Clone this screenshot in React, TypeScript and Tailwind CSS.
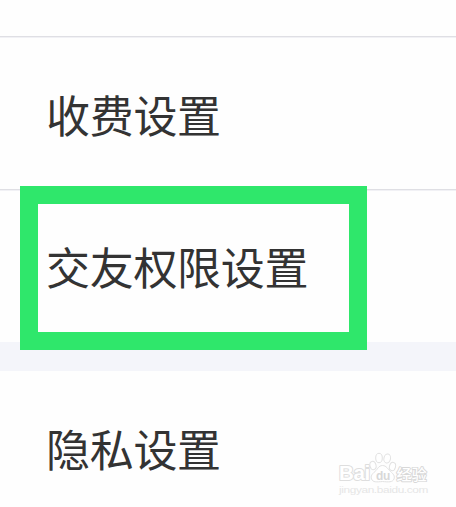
function Watermark() {
  return (
    <svg
      className="absolute left-[334px] top-[448px]"
      width="100"
      height="54"
      viewBox="0 0 100 54"
      fill="#ffffff"
      stroke="#e2e2e2"
      strokeWidth="1"
      strokeLinejoin="round"
      fontFamily='"Liberation Sans", "Noto Sans CJK SC", sans-serif'
    >
      <text x="5" y="32" fontSize="19.500" fontWeight="700" textLength="31" lengthAdjust="spacingAndGlyphs" strokeWidth="2" stroke="#dedede" paintOrder="stroke">Bai</text>
      <ellipse cx="39" cy="17.5" rx="3" ry="4.2" transform="rotate(-15 39 17.5)" />
      <ellipse cx="45" cy="10" rx="3.300" ry="4.700" />
      <ellipse cx="53.200" cy="10.500" rx="3.300" ry="4.500" transform="rotate(12 53.2 10.5)" />
      <ellipse cx="58.500" cy="18.500" rx="3" ry="4.2" transform="rotate(15 58.5 18.5)" />
      <path d="M48.500 17.500c-4 0-5 4-7.500 6-3 2.500-4.500 4.500-3.500 7.500 1.500 3.500 5 3 11 2.500 6 .5 10 1 11.500-2.500 1-3-.5-5-3.500-7.500-2.500-2-4-6-8-6Z" />
      <text x="42" y="31.500" fontSize="12" fontWeight="700" fill="#d8d8d8" stroke="none" textLength="14" lengthAdjust="spacingAndGlyphs">du</text>
      <text x="62.500" y="31.500" fontSize="15" fontWeight="500" textLength="30" strokeWidth="1.800" stroke="#d8d8d8" paintOrder="stroke" fontFamily='"Noto Sans CJK SC", sans-serif'>经验</text>
      <text x="5" y="45" fontSize="9.500" fill="#e6e6e6" stroke="none" textLength="89" lengthAdjust="spacingAndGlyphs">jingyan.baidu.com</text>
    </svg>
  );
}

export default function App() {
  return (
    <div
      className="relative h-[507px] w-[456px] overflow-hidden bg-[#fefefe] text-[44px] leading-[64px] tracking-[-0.3px] text-[#333333]"
      style={{ fontFamily: '"Noto Sans CJK SC", sans-serif' }}
    >
      <div className="h-[37px] border-b border-[#dfdfe4]" />
      <div className="h-px bg-[#f1f1f5]" />
      <div className="flex h-[152px] items-center border-b border-[#dfdfe4] pl-[46px]">收费设置</div>
      <div className="h-px bg-[#f1f1f5]" />
      <div className="flex h-[151px] items-center pb-[2px] pl-[46px]">交友权限设置</div>
      <div className="h-[29px] bg-[#f4f5fa]" />
      <div className="flex h-[153px] items-center pl-[46px]">隐私设置</div>
      <div className="absolute left-[20px] top-[186px] h-[164px] w-[347px] border-[18px] border-[#2fe76b]" />
      <Watermark />
    </div>
  );
}
